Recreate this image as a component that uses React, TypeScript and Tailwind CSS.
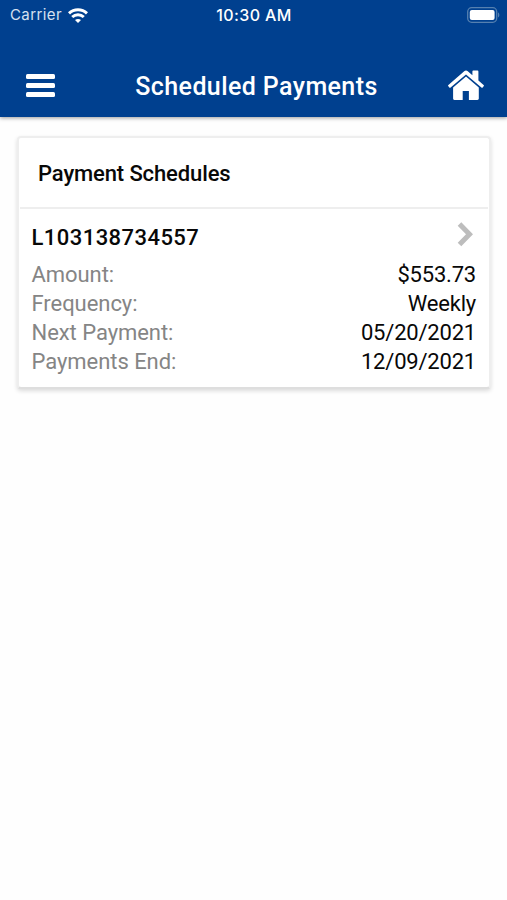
const details = [
  { label: "Amount:", value: "$553.73" },
  { label: "Frequency:", value: "Weekly" },
  { label: "Next Payment:", value: "05/20/2021" },
  { label: "Payments End:", value: "12/09/2021" },
]

function WifiIcon() {
  return (
    <svg width="20" height="15" viewBox="0 0 20 15" fill="none" stroke="#fff" strokeWidth="3">
      <path d="M1 5.3C6 .5 14 .5 19 5.3" />
      <path d="M4.2 9c3.3-3 8.3-3 11.6 0" />
      <path d="M10 15 7 12c1.7-1.5 4.3-1.5 6 0Z" fill="#fff" stroke="none" />
    </svg>
  )
}

function BatteryIcon() {
  return (
    <svg width="33" height="16" viewBox="0 0 33 16" fill="none">
      <rect x=".7" y=".7" width="29" height="14.6" rx="4" stroke="#5580b0" strokeWidth="1.3" />
      <rect x="2.8" y="2.9" width="24.8" height="10.2" rx="2" fill="#fff" />
      <path d="M31 5.6c1.8.6 1.8 4.2 0 4.8Z" fill="#5580b0" />
    </svg>
  )
}

function HomeIcon() {
  return (
    <svg width="38" height="32" viewBox="0 0 38 32" fill="#fff">
      <path d="M19 7.6 6.1 18.6v11c0 .9.5 1.4 1.3 1.4h8.3v-9h6.2v9h8.5c.9 0 1.4-.5 1.4-1.4v-11Z" />
      <path d="M17.2 2.2c1.1-.9 2.5-.9 3.6 0l4.6 4V2.5c0-.6.3-.9.9-.9h4.2c.6 0 .9.3.9.9v8.9l5.2 4.5c.5.4.5.8.2 1.2l-1.1 1.3c-.4.4-.8.5-1.3.1L19 5.4 3.6 18.5c-.5.4-.9.3-1.3-.1l-1.1-1.3c-.4-.4-.3-.8.2-1.2Z" />
    </svg>
  )
}

function StatusBar() {
  return (
    <div className="grid h-[30px] grid-cols-3 items-center pr-[7px] pl-[10px] font-['Inter',sans-serif] text-[15px]">
      <div className="flex items-center gap-[6px]">
        <span className="pt-px tracking-[0.4px] text-[#d5e0f0]">Carrier</span>
        <WifiIcon />
      </div>
      <span className="pr-[2px] text-center text-[16px] font-medium tracking-[0.4px]">10:30 AM</span>
      <div className="flex justify-end pb-px">
        <BatteryIcon />
      </div>
    </div>
  )
}

function Header() {
  return (
    <header className="h-[117px] bg-[#00408f] text-white shadow-[0_1px_4px_rgba(0,0,0,0.4)]">
      <StatusBar />
      <div className="mt-[25px] flex h-[60px] items-center pr-[22px] pl-[26px]">
        <button className="flex w-[29px] flex-col gap-[4px]" aria-label="Menu">
          <span className="h-[5px] w-full rounded-[1.5px] bg-white" />
          <span className="h-[5px] w-full rounded-[1.5px] bg-white" />
          <span className="h-[5px] w-full rounded-[1.5px] bg-white" />
        </button>
        <h1 className="flex-1 pt-[3px] pl-[11px] text-center text-[25px] font-medium tracking-[0.4px]">
          Scheduled Payments
        </h1>
        <button aria-label="Home">
          <HomeIcon />
        </button>
      </div>
    </header>
  )
}

function ScheduleCard() {
  return (
    <section className="mt-[19px] mr-4 ml-[17px] h-[253px] rounded-[4px] border-2 border-[#eeeeee] border-b-[#dedede] bg-white shadow-[0_2px_4px_rgba(0,0,0,0.14)]">
      <h2 className="mx-px flex h-[71px] items-center border-b-2 border-[#eeeeee] pt-[2px] pl-[18px] text-[22px] font-medium tracking-[-0.12px]">
        Payment Schedules
      </h2>
      <div className="pt-[14px] pr-[13px] pl-[12.5px] text-[22px] leading-[29px]">
        <div className="flex h-[36.5px] items-start justify-between">
          <span className="font-medium tracking-[0.45px]">L103138734557</span>
          <svg className="-mt-[2px]" width="20" height="27" viewBox="0 0 20 27" fill="none" stroke="#bdbdbd" strokeWidth="5">
            <path d="M3.5 3 13.5 13.3 3.5 23.5" />
          </svg>
        </div>
        {details.map(({ label, value }) => (
          <div key={label} className="flex justify-between">
            <span className="tracking-[-0.05px] text-[#858585]">{label}</span>
            <span className="tracking-[-0.2px]">{value}</span>
          </div>
        ))}
      </div>
    </section>
  )
}

export default function App() {
  return (
    <div className="min-h-screen bg-[#fefefe] font-['Roboto',sans-serif] text-[#080808]">
      <Header />
      <ScheduleCard />
    </div>
  )
}
